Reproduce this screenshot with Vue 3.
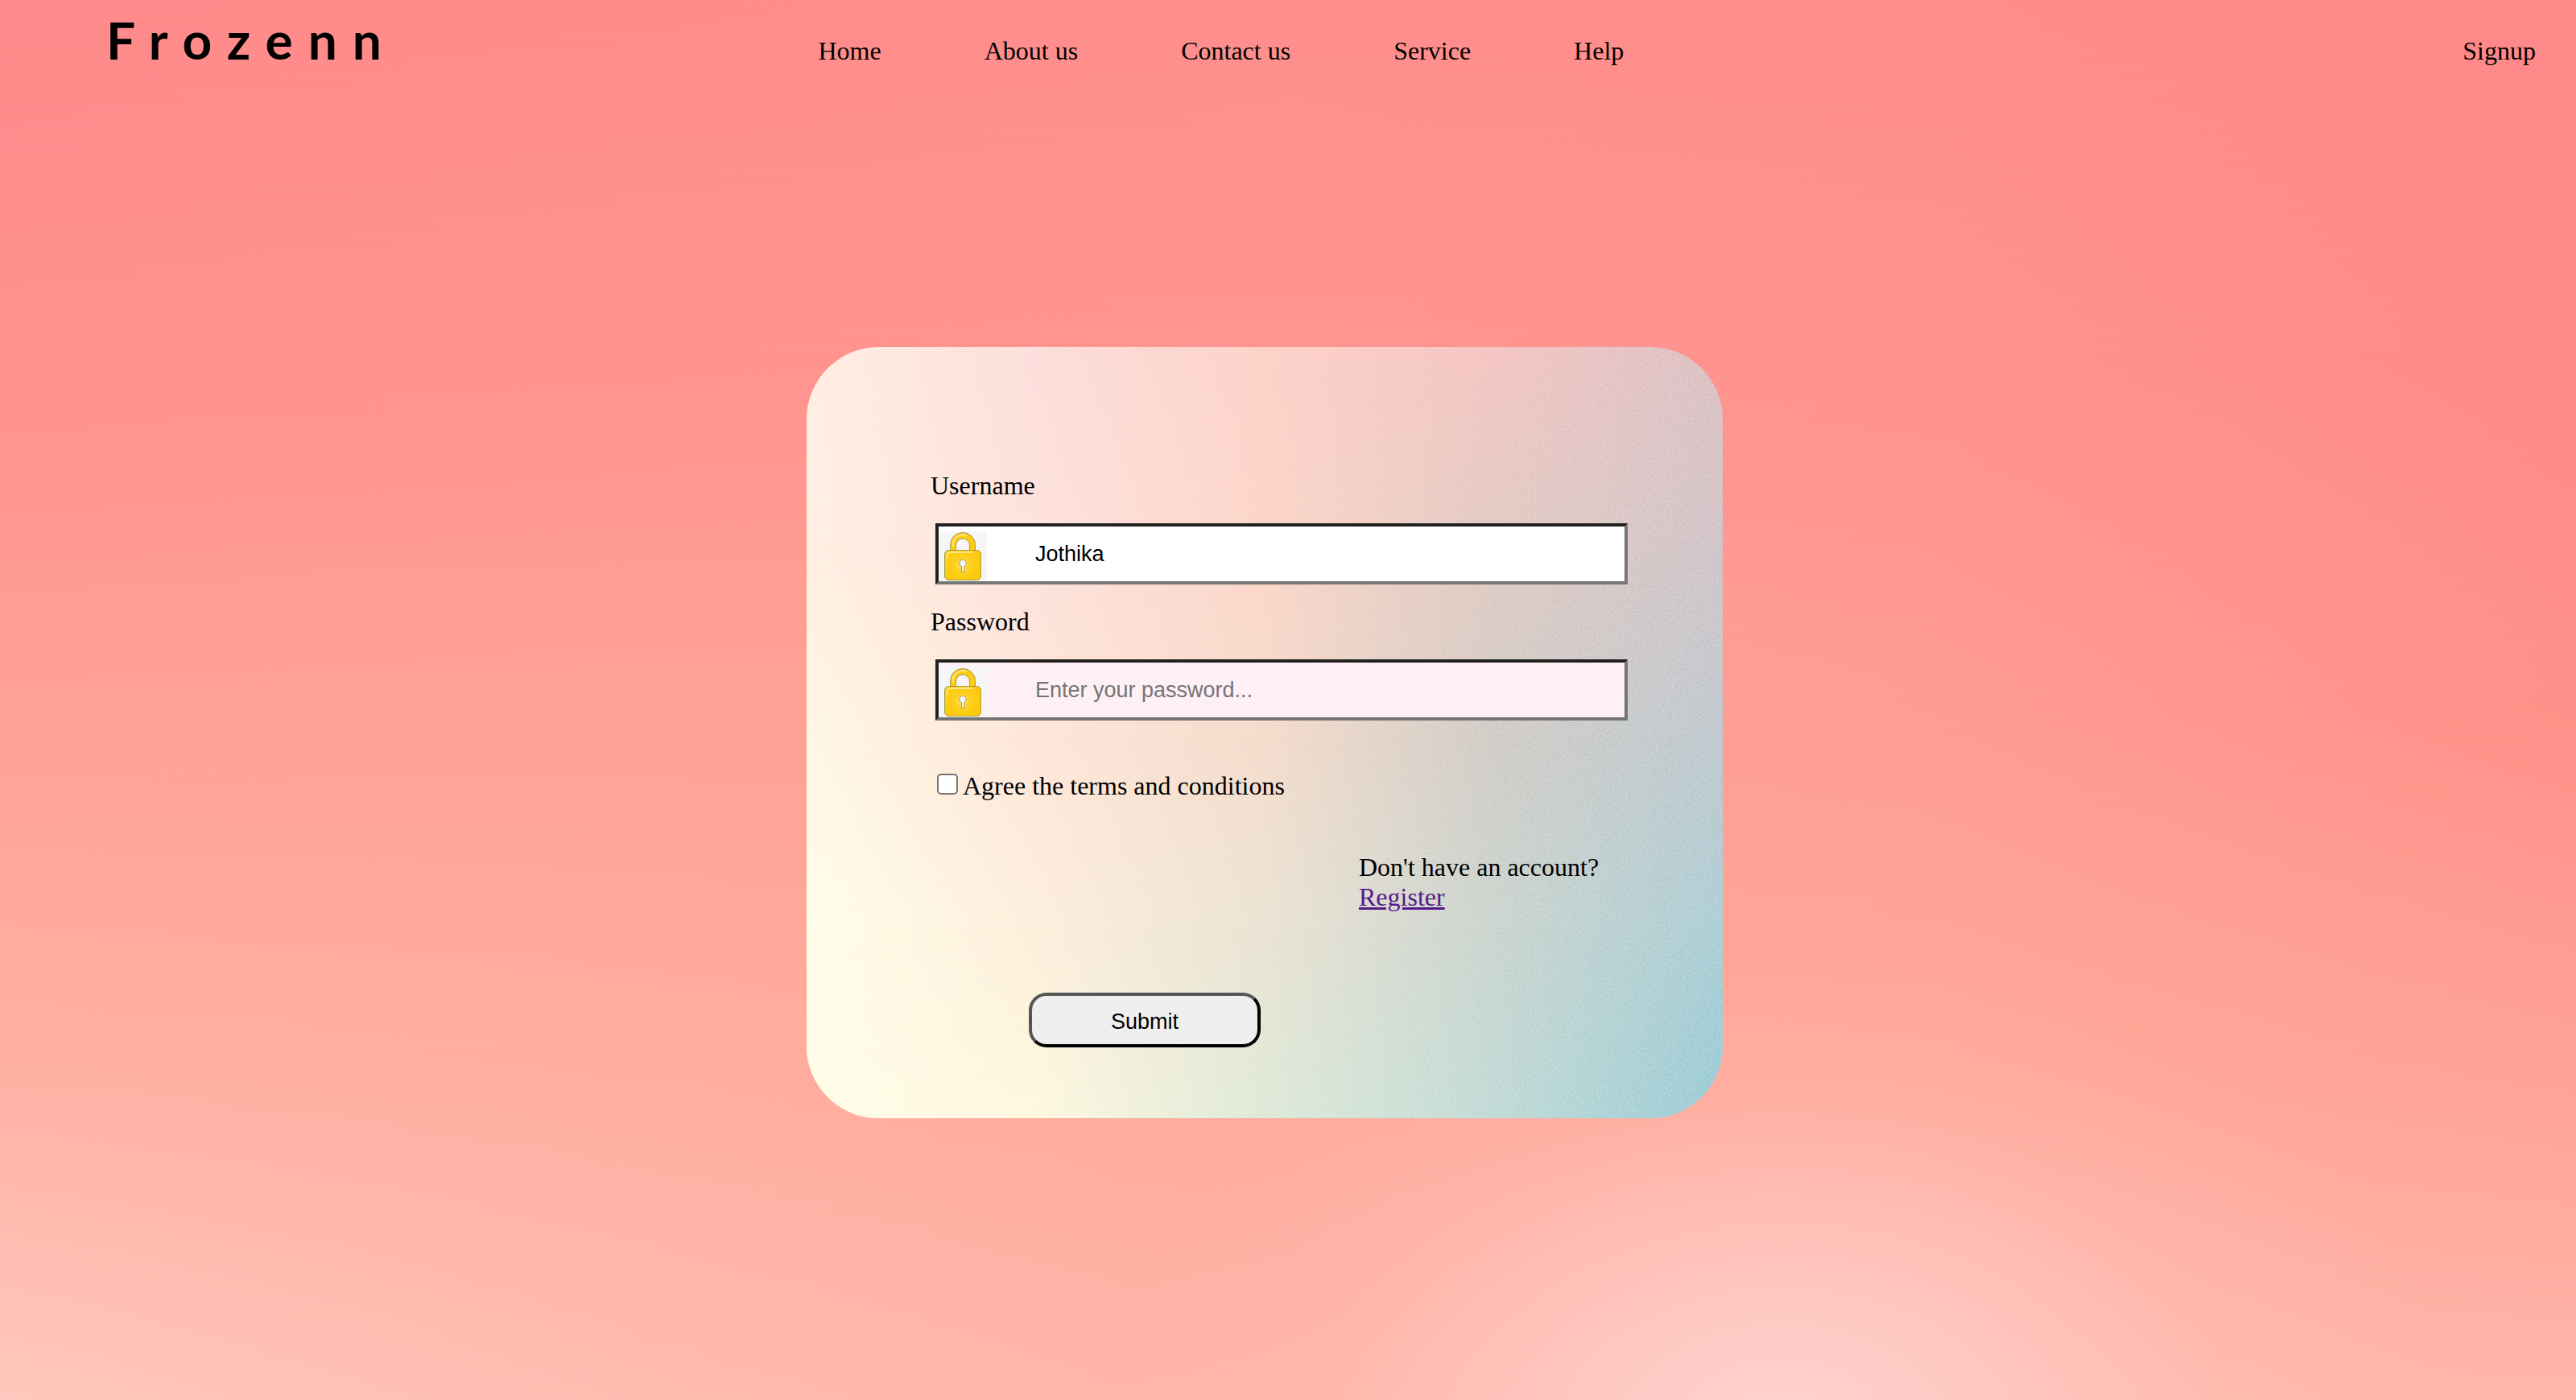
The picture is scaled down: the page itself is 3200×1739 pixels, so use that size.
<script setup>
import { ref } from 'vue'

const links = ['Home', 'About us', 'Contact us', 'Service', 'Help']
const username = ref('Jothika')
const password = ref('')
const agreed = ref(false)

// Each row runs left to right; rows are cross-faded downwards from one `at` to the next.
const pageMesh = [
  { at: 0, colors: ['#ff8a8b', '#ff8c8b', '#ff8e8c', '#ff8d8b', '#ff8989'] },
  { at: 25, colors: ['#ff918d', '#ff938f', '#ff9590', '#ff928e', '#ff8a8a'] },
  { at: 50, colors: ['#ffa095', '#ffa196', '#ffa196', '#ff9c92', '#ff9089'] },
  { at: 75, colors: ['#ffb0a2', '#ffad9f', '#ffa99b', '#ffa899', '#ffa195'] },
  { at: 100, colors: ['#ffc7bd', '#ffbbaf', '#ffb3a6', '#ffb8ac', '#ffb6a9'] }
]
const cardMesh = [
  { at: 0, colors: ['#ffefe2', '#fcdfdc', '#fdd2c8', '#f5c3c0', '#dbbec2'] },
  { at: 25, colors: ['#ffefe2', '#fee2dc', '#fcd4c7', '#e0c8c0', '#cfc2c6'] },
  { at: 50, colors: ['#fff6e4', '#fee6d8', '#f5dbca', '#cfcac4', '#bcc6cd'] },
  { at: 75, colors: ['#fffee8', '#fdeedb', '#eae2d2', '#c8d2cc', '#a8cbd3'] },
  { at: 100, colors: ['#fffce8', '#fdf8df', '#dde8d6', '#bdd8d4', '#94c9d3'] }
]

function layers(mesh) {
  return mesh.map((row, i) => {
    const style = { backgroundImage: `linear-gradient(to right, ${row.colors.join(', ')})` }
    if (i > 0) {
      style.maskImage = `linear-gradient(to bottom, transparent ${mesh[i - 1].at}%, #000 ${row.at}%)`
    }
    return style
  })
}
const pageLayers = layers(pageMesh)
const cardLayers = layers(cardMesh)
</script>

<template>
  <div class="page">
    <div class="mesh" aria-hidden="true">
      <div v-for="(layer, i) in pageLayers" :key="i" class="layer" :style="layer"></div>
      <div class="layer glow"></div>
    </div>

    <header class="header">
      <div class="logo">Frozenn</div>
      <nav class="nav">
        <a v-for="link in links" :key="link" href="#">{{ link }}</a>
      </nav>
      <a class="signup" href="#">Signup</a>
    </header>

    <main class="card">
      <div class="mesh" aria-hidden="true">
        <div v-for="(layer, i) in cardLayers" :key="i" class="layer" :style="layer"></div>
        <svg class="layer grain" width="100%" height="100%">
          <filter id="grain" x="0" y="0" width="100%" height="100%">
            <feTurbulence type="fractalNoise" baseFrequency="0.45" numOctaves="2" seed="4" />
            <feColorMatrix values="0 0 0 0 1  0 0 0 0 1  0 0 0 0 1  1.4 0 0 0 -0.55" />
          </filter>
          <rect width="100%" height="100%" filter="url(#grain)" />
        </svg>
      </div>

      <form class="form" @submit.prevent>
        <label for="username">Username</label>
        <div class="field">
          <input id="username" v-model="username" class="text-input filled" type="text" />
          <svg class="lock" viewBox="0 0 60 62" aria-hidden="true">
            <defs>
              <pattern id="checks" width="4" height="4" patternUnits="userSpaceOnUse">
                <rect width="4" height="4" fill="#fbfbfb" />
                <path d="M0 0h2v2H0zM2 2h2v2H2z" fill="#f1f1f1" />
              </pattern>
              <radialGradient id="brass" cx="0.5" cy="0.5" r="0.6">
                <stop offset="0" stop-color="#ffdf5a" />
                <stop offset="0.45" stop-color="#fdcf1c" />
                <stop offset="1" stop-color="#fdc905" />
              </radialGradient>
              <g id="padlock">
                <rect width="60" height="62" fill="url(#checks)" />
                <path d="M14.500 24V16.500A15.500 15 0 0 1 45.500 16.500V24H38.500V17.500A8.500 8.500 0 0 0 21.500 17.500V24Z" fill="#fccb12" stroke="#8c8a4c" stroke-width="0.8" />
                <path d="M18 18A12 12 0 0 1 34 5" fill="none" stroke="#ffe27a" stroke-width="2" stroke-linecap="round" />
                <rect x="7.500" y="23.500" width="45" height="37" rx="5" fill="url(#brass)" stroke="#8c8a4c" stroke-width="0.8" />
                <path d="M11 34V29Q11 26 14 26H42" fill="none" stroke="#ffe486" stroke-width="2" stroke-linecap="round" />
                <path d="M28.500 50.500V43.500A4.200 4.200 0 1 1 31.500 43.500V50.500Z" fill="#f8f8f8" stroke="#8c8a5c" stroke-width="0.8" />
              </g>
            </defs>
            <use href="#padlock" />
          </svg>
        </div>

        <label for="password">Password</label>
        <div class="field">
          <input id="password" v-model="password" class="text-input" type="password" placeholder="Enter your password..." />
          <svg class="lock" viewBox="0 0 60 62" aria-hidden="true"><use href="#padlock" /></svg>
        </div>

        <div class="terms">
          <input id="terms" v-model="agreed" type="checkbox" />
          <label for="terms">Agree the terms and conditions</label>
        </div>

        <p class="register">Don't have an account?<br /><a href="#">Register</a></p>

        <button class="submit" type="submit">Submit</button>
      </form>
    </main>
  </div>
</template>

<style>
body {
  margin: 0;
}
</style>

<style scoped>
.page {
  position: relative;
  box-sizing: border-box;
  min-height: 100vh;
  padding-bottom: 100px;
  font-family: "Liberation Serif", "Times New Roman", serif;
  font-size: 32px;
  line-height: 37px;
  color: #000;
}

.mesh,
.layer {
  position: absolute;
  inset: 0;
}

.mesh {
  overflow: hidden;
}

.glow {
  background: radial-gradient(ellipse 26% 34% at 69% 102%, rgba(255, 214, 212, 0.9), rgba(255, 208, 204, 0.55) 38%, rgba(255, 198, 190, 0.2) 68%, rgba(255, 190, 180, 0));
}

.grain {
  opacity: 0.45;
  mask-image: linear-gradient(105deg, transparent 15%, #000 75%);
}

.header {
  position: relative;
  display: grid;
  grid-template-columns: 31% 1fr auto;
  align-items: baseline;
  padding: 10px 50px 0 0;
}

.logo {
  padding-left: 132px;
  font-family: Lato, "Trebuchet MS", sans-serif;
  font-size: 64px;
  font-weight: 700;
  line-height: 80px;
  letter-spacing: 19px;
}

.nav {
  display: flex;
  gap: 128px;
  padding-left: 40px;
}

.nav a,
.signup {
  color: inherit;
  text-decoration: none;
}

.card {
  position: relative;
  box-sizing: border-box;
  width: 36%;
  max-width: 1138px;
  margin: 341px 0 0 31.3125%;
  padding: 154px 118px 88px 154px;
  border-radius: 90px;
  overflow: hidden;
}

.form {
  position: relative;
  display: flex;
  flex-direction: column;
  gap: 28px;
}

.field {
  position: relative;
  margin-left: 6px;
}

.text-input {
  display: block;
  box-sizing: border-box;
  width: 100%;
  height: 76px;
  padding: 0 4px 0 120px;
  border: 4px solid;
  border-color: #212121 #767676 #767676 #212121;
  border-radius: 0;
  outline: none;
  background: #fff0f5;
  font-family: "Liberation Sans", Arial, sans-serif;
  font-size: 27px;
  color: #000;
}

.text-input.filled {
  background: #fff;
}

.text-input::placeholder {
  color: #757575;
}

.lock {
  position: absolute;
  left: 4px;
  bottom: 4px;
  width: 60px;
  height: 62px;
}

.terms {
  display: flex;
  align-items: flex-start;
  gap: 6px;
  margin: 35px 0 0 8px;
}

.terms input {
  appearance: none;
  box-sizing: border-box;
  width: 26px;
  height: 26px;
  margin: 3px 0 0;
  border: 2px solid #767676;
  border-radius: 5px;
  background: #fff;
}

.terms input:checked {
  border-color: #0075ff;
  background: #0075ff;
}

.register {
  align-self: flex-end;
  width: 334px;
  margin: 36px 0 0;
}

.register a {
  color: #551a8b;
}

.submit {
  width: 288px;
  height: 68px;
  margin: 72px 0 0 122px;
  padding: 4px 0 0;
  border: 4px solid;
  border-color: #555 #000 #000 #555;
  border-radius: 22px;
  background: #efefef;
  font-family: "Liberation Sans", Arial, sans-serif;
  font-size: 27px;
  color: #000;
}
</style>
